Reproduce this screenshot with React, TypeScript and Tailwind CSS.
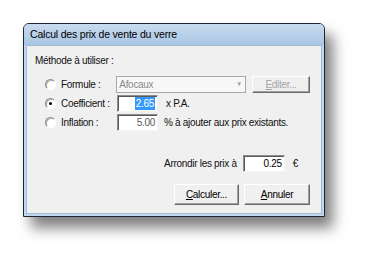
import React from 'react';

const font = { fontFamily: '"Liberation Sans", Arial, sans-serif' };

const Radio = ({ checked = false }: { checked?: boolean }) => (
  <span className="relative w-[11px] h-[11px] shrink-0 rounded-full border border-t-[#8a8a8a] border-l-[#8a8a8a] border-b-white border-r-white bg-white shadow-[inset_1px_1px_0_#b0b0b0]">
    {checked && <span className="absolute left-[3px] top-[3px] w-[3px] h-[3px] rounded-full bg-black" />}
  </span>
);

const Field = ({ value, w, selected = false, gray = false }: { value: string; w: string; selected?: boolean; gray?: boolean }) => (
  <div className={`${w} h-[17px] flex items-center justify-end pr-[2px] bg-white border border-t-[#8c8c8c] border-l-[#8c8c8c] border-b-[#f4f4f4] border-r-[#f4f4f4] shadow-[inset_1px_1px_0_#5a5a5a]`}>
    <span className={selected ? 'bg-[#3399ff] text-white px-[1px] leading-[13px]' : gray ? 'text-[#5a5a5a] leading-[13px]' : 'text-black leading-[13px]'}>
      {value}
    </span>
  </div>
);

const Button = ({ label, u, disabled = false, w = 'w-[65px]' }: { label: string; u: number; disabled?: boolean; w?: string }) => (
  <button
    className={`${w} h-[17px] flex items-center justify-center bg-[#f0f0f0] border border-t-white border-l-white border-b-[#6a6a6a] border-r-[#6a6a6a] shadow-[inset_-1px_-1px_0_#a0a0a0] ${
      disabled ? 'text-[#a3a3a3]' : 'text-black'
    }`}
  >
    <span>
      {label.slice(0, u)}
      <span className="underline">{label.slice(u, u + 1)}</span>
      {label.slice(u + 1)}
    </span>
  </button>
);

export default function App() {
  return (
    <div className="w-[368px] h-[260px] bg-white pl-[23px] pt-[23px] text-[10px] tracking-[-0.3px] text-[#111]" style={font}>
      <div className="w-[302px] h-[194px] flex flex-col border border-[#1c2733] rounded-t-[6px] bg-[#c3d7ec] shadow-[8px_11px_14px_rgba(0,0,0,0.5)]">
        {/* Title bar */}
        <div className="h-[21px] shrink-0 flex items-center pl-[6px] rounded-t-[5px] bg-gradient-to-b from-[#c9dbef] to-[#a9c5e4] text-[10.5px] tracking-[-0.2px] text-black">
          Calcul des prix de vente du verre
        </div>

        {/* Body */}
        <div className="flex-1 mx-[2px] mb-[2px] bg-[#f0f0f0] border border-[#9fbad6] flex flex-col pl-[8px] pr-[11px]">
          <div className="mt-[7px] h-[14px] flex items-center">Méthode à utiliser :</div>

          <div className="mt-[8px] flex flex-col gap-[1px]">
            <div className="h-[18px] flex items-center">
              <div className="w-[82px] flex items-center gap-[5px] pl-[10px]">
                <Radio />
                <span>Formule :</span>
              </div>
              <div className="w-[131px] h-[17px] flex items-center justify-between pl-[2px] pr-[3px] bg-[#f7f7f7] border border-[#a8a8a8]">
                <span className="text-[#8a8a8a]">Afocaux</span>
                <span className="text-[#9a9a9a] text-[6px]">▼</span>
              </div>
              <div className="ml-[6px]">
                <Button label="Editer..." u={0} disabled w="w-[58px]" />
              </div>
            </div>

            <div className="h-[18px] flex items-center">
              <div className="w-[82px] flex items-center gap-[5px] pl-[10px]">
                <Radio checked />
                <span>Coefficient :</span>
              </div>
              <Field value="2.65" w="w-[41px]" selected />
              <span className="ml-[8px]">x P.A.</span>
            </div>

            <div className="h-[18px] flex items-center">
              <div className="w-[82px] flex items-center gap-[5px] pl-[10px]">
                <Radio />
                <span>Inflation :</span>
              </div>
              <Field value="5.00" w="w-[41px]" gray />
              <span className="ml-[6px]">% à ajouter aux prix existants.</span>
            </div>
          </div>

          <div className="mt-[23px] h-[18px] flex items-center justify-end pr-[12px]">
            <span className="mr-[6px]">Arrondir les prix à</span>
            <Field value="0.25" w="w-[42px]" />
            <span className="ml-[8px]">€</span>
          </div>

          <div className="mt-[12px] flex justify-end gap-[5px]">
            <Button label="Calculer..." u={0} w="w-[65px] !h-[21px]" />
            <Button label="Annuler" u={0} w="w-[66px] !h-[21px]" />
          </div>
        </div>
      </div>
    </div>
  );
}
